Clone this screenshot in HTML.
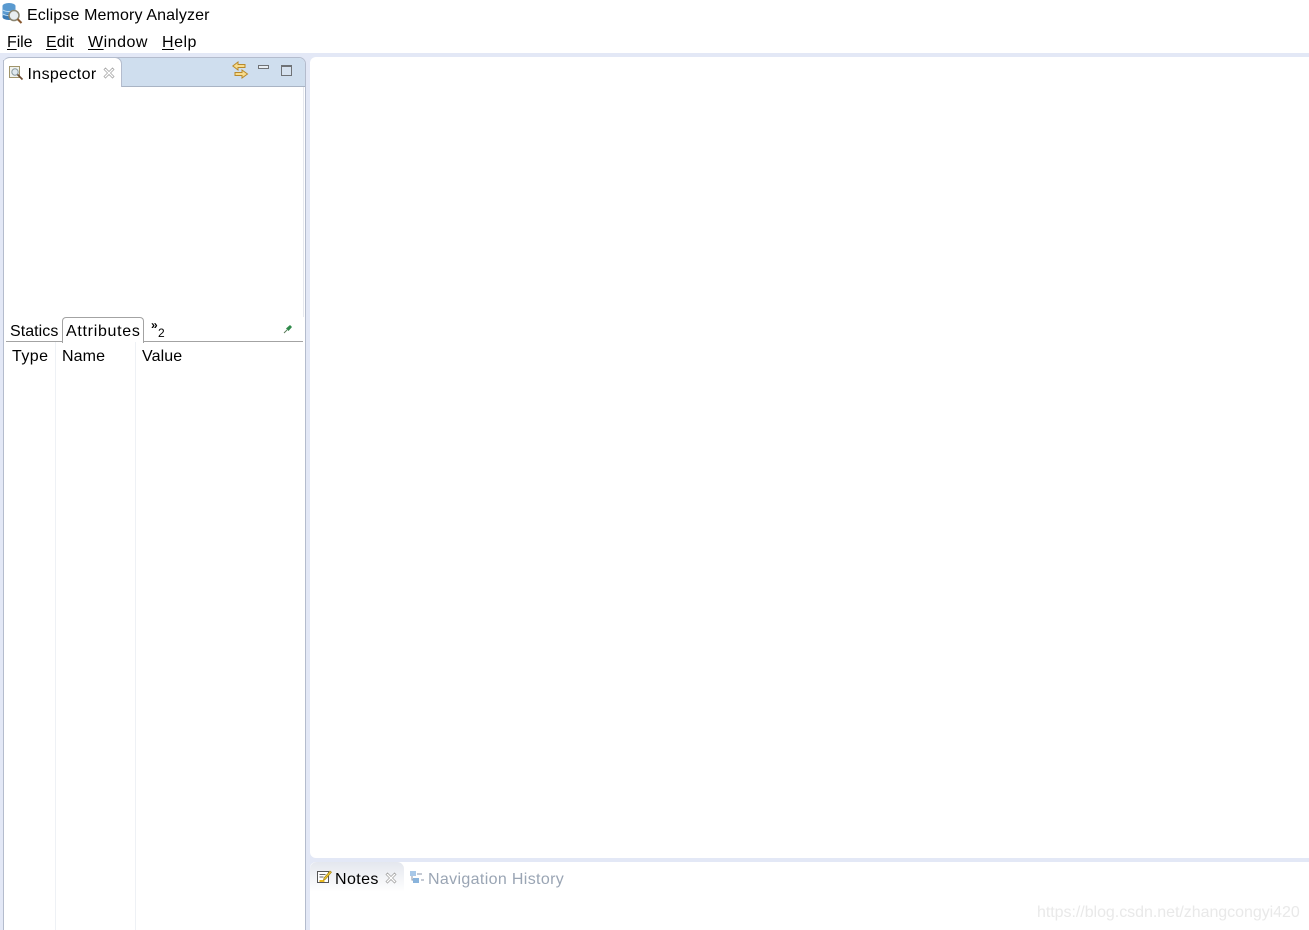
<!DOCTYPE html>
<html><head><meta charset="utf-8"><style>
html,body{margin:0;padding:0;background:#fff}
#r{position:relative;width:1309px;height:930px;overflow:hidden;background:#e3e8f6;font-family:"Liberation Sans",sans-serif;font-size:16px;color:#000}
.a{position:absolute}
.t{position:absolute;white-space:nowrap;line-height:20px;height:20px}
u{text-decoration:underline;text-underline-offset:2px}
svg{position:absolute;overflow:visible}
</style></head><body><div id="r">
<div class="a" style="left:0;top:0;width:1309px;height:53px;background:#fff"></div>

<svg style="left:1px;top:2px" width="22" height="22" viewBox="0 0 22 22">
<ellipse cx="8" cy="4" rx="6.5" ry="3" fill="#5a9ad0"/><rect x="1.500" y="4" width="13" height="11" fill="#5a9ad0"/><ellipse cx="8" cy="15" rx="6.5" ry="3" fill="#3a7ab4"/><path d="M2 8c3 2 9 2 12 0M2 12c3 2 9 2 12 0" stroke="#c5e0f4" fill="none"/>
<circle cx="13" cy="13.500" r="5" fill="#e8eef0" stroke="#8a8672" stroke-width="1.500"/><path d="M16.500 17l4 4" stroke="#8a5a30" stroke-width="2"/></svg>
<div class="t" style="left:27px;top:6px;letter-spacing:.13px">Eclipse Memory Analyzer</div>
<div class="t" style="left:7px;top:33px;letter-spacing:-.1px"><u>F</u>ile</div>
<div class="t" style="left:46px;top:33px;letter-spacing:.1px"><u>E</u>dit</div>
<div class="t" style="left:88px;top:33px;letter-spacing:.5px"><u>W</u>indow</div>
<div class="t" style="left:162px;top:33px;letter-spacing:.5px"><u>H</u>elp</div>

<!-- left panel -->
<div class="a" style="left:3px;top:57px;width:301px;height:880px;background:#fff;border:1px solid #b4bccd;border-radius:7px 7px 0 0"></div>
<div class="a" style="left:4px;top:58px;width:301px;height:29px;background:#cfdeee;border-bottom:1px solid #a9b4c4;box-sizing:border-box;border-radius:6px 6px 0 0"></div>
<div class="a" style="left:3px;top:57px;width:118px;height:29px;background:#fff;border:1px solid #b4bccd;border-bottom:0;border-left:0;border-radius:7px 7px 0 0"></div>
<div class="a" style="left:3px;top:60px;width:1px;height:30px;background:#b4bccd"></div>
<div class="a" style="left:303px;top:87px;width:1px;height:230px;background:#e6e8ee"></div>

<svg style="left:9px;top:66px" width="15" height="15" viewBox="0 0 15 15"><rect x=".5" y=".5" width="10" height="11" fill="#f0f2ee" stroke="#a0946a"/><circle cx="6" cy="6" r="3.2" fill="#dfe8ee" stroke="#8a9aa0"/><path d="M8.500 8.500l5 5" stroke="#6b4a30" stroke-width="1.600"/></svg>
<div class="t" style="left:27.500px;top:65px;letter-spacing:.36px">Inspector</div>
<svg style="left:103px;top:67px" width="12" height="12" viewBox="0 0 12 12"><path d="M1 2.500L2.500 1 6 4.500 9.500 1 11 2.500 7.500 6 11 9.500 9.500 11 6 7.500 2.500 11 1 9.500 4.500 6z" fill="#fff" stroke="#a8a8a8" stroke-width=".8"/></svg>

<svg style="left:232px;top:61px" width="17" height="18" viewBox="0 0 17 18"><path d="M6 1L.8 5 6 9V6.500h7v-3H6z" fill="#f8dc8c" stroke="#b8892c"/><path d="M10 9l5.500 4-5.500 4v-2.500H3v-3h7z" fill="#f8dc8c" stroke="#b8892c"/></svg>
<div class="a" style="left:258px;top:65px;width:9px;height:2px;background:#e8edf2;border:1px solid #6f7276"></div>
<div class="a" style="left:281px;top:65px;width:9px;height:8px;background:#d6e2ef;border:1px solid #6f7276;border-top-width:2px"></div>

<!-- tabs -->
<div class="a" style="left:6px;top:341px;width:297px;height:1px;background:#a3a3a3"></div>
<div class="a" style="left:62px;top:317px;width:80px;height:25px;background:#fff;border:1px solid #a3a3a3;border-bottom:0;border-radius:4px 4px 0 0"></div>
<div class="t" style="left:10px;top:322px;letter-spacing:.05px">Statics</div>
<div class="t" style="left:66px;top:322px;letter-spacing:.7px">Attributes</div>
<div class="t" style="left:151px;top:315px;font-size:12px;font-weight:bold">»</div>
<div class="t" style="left:158px;top:323px;font-size:12px">2</div>
<svg style="left:283px;top:324px" width="10" height="10" viewBox="0 0 10 10"><path d="M1 9l3-3" stroke="#5a7a5a"/><path d="M3 4.500L7 1l2 2-3.500 4z" fill="#2f8a4a"/></svg>
<div class="a" style="left:55px;top:342px;width:1px;height:588px;background:#eef1f5"></div>
<div class="a" style="left:135px;top:342px;width:1px;height:588px;background:#eef1f5"></div>
<div class="t" style="left:12px;top:347px;letter-spacing:.45px">Type</div>
<div class="t" style="left:62px;top:347px;letter-spacing:.1px">Name</div>
<div class="t" style="left:142px;top:347px;letter-spacing:.1px">Value</div>

<!-- editor -->
<div class="a" style="left:310px;top:57px;width:1010px;height:801px;background:#fff;border-radius:6px 0 0 6px"></div>

<!-- bottom panel -->
<div class="a" style="left:310px;top:862px;width:999px;height:68px;background:#fff;border-radius:6px 0 0 0"></div>
<div class="a" style="left:310px;top:862px;width:94px;height:30px;background:linear-gradient(#e4e7ee,#fff);border-radius:7px 7px 0 0"></div>
<svg style="left:317px;top:870px" width="15" height="14" viewBox="0 0 15 14"><rect x=".5" y="1.500" width="11" height="11" fill="#fff" stroke="#555"/><path d="M2.500 4.500h6M2.500 7h4" stroke="#666"/><path d="M2.500 11h5" stroke="#e8b820" stroke-width="2"/><path d="M7 8l6-7 1.500 1.200-6 7-2 .8z" fill="#f0c830" stroke="#9a7a10" stroke-width=".6"/></svg>
<div class="t" style="left:335px;top:870px;letter-spacing:.4px">Notes</div>
<svg style="left:385px;top:872px" width="12" height="12" viewBox="0 0 12 12"><path d="M1 2.500L2.500 1 6 4.500 9.500 1 11 2.500 7.500 6 11 9.500 9.500 11 6 7.500 2.500 11 1 9.500 4.500 6z" fill="#fff" stroke="#a8a8a8" stroke-width=".8"/></svg>
<svg style="left:410px;top:871px" width="15" height="14" viewBox="0 0 15 14"><rect x="0" y="0" width="6" height="5" fill="#a8c8e8"/><rect x="3" y="7" width="6" height="5" fill="#8ab4dc"/><path d="M2 5v4h1M7 3h5M11 9h3" stroke="#8a96a8" fill="none"/></svg>
<div class="t" style="left:428px;top:870px;color:#9aa5b4;letter-spacing:.35px">Navigation History</div>
<div class="t" style="left:1037px;top:903px;color:#e9e9e9;letter-spacing:-.04px">https://blog.csdn.net/zhangcongyi420</div>
</div></body></html>
